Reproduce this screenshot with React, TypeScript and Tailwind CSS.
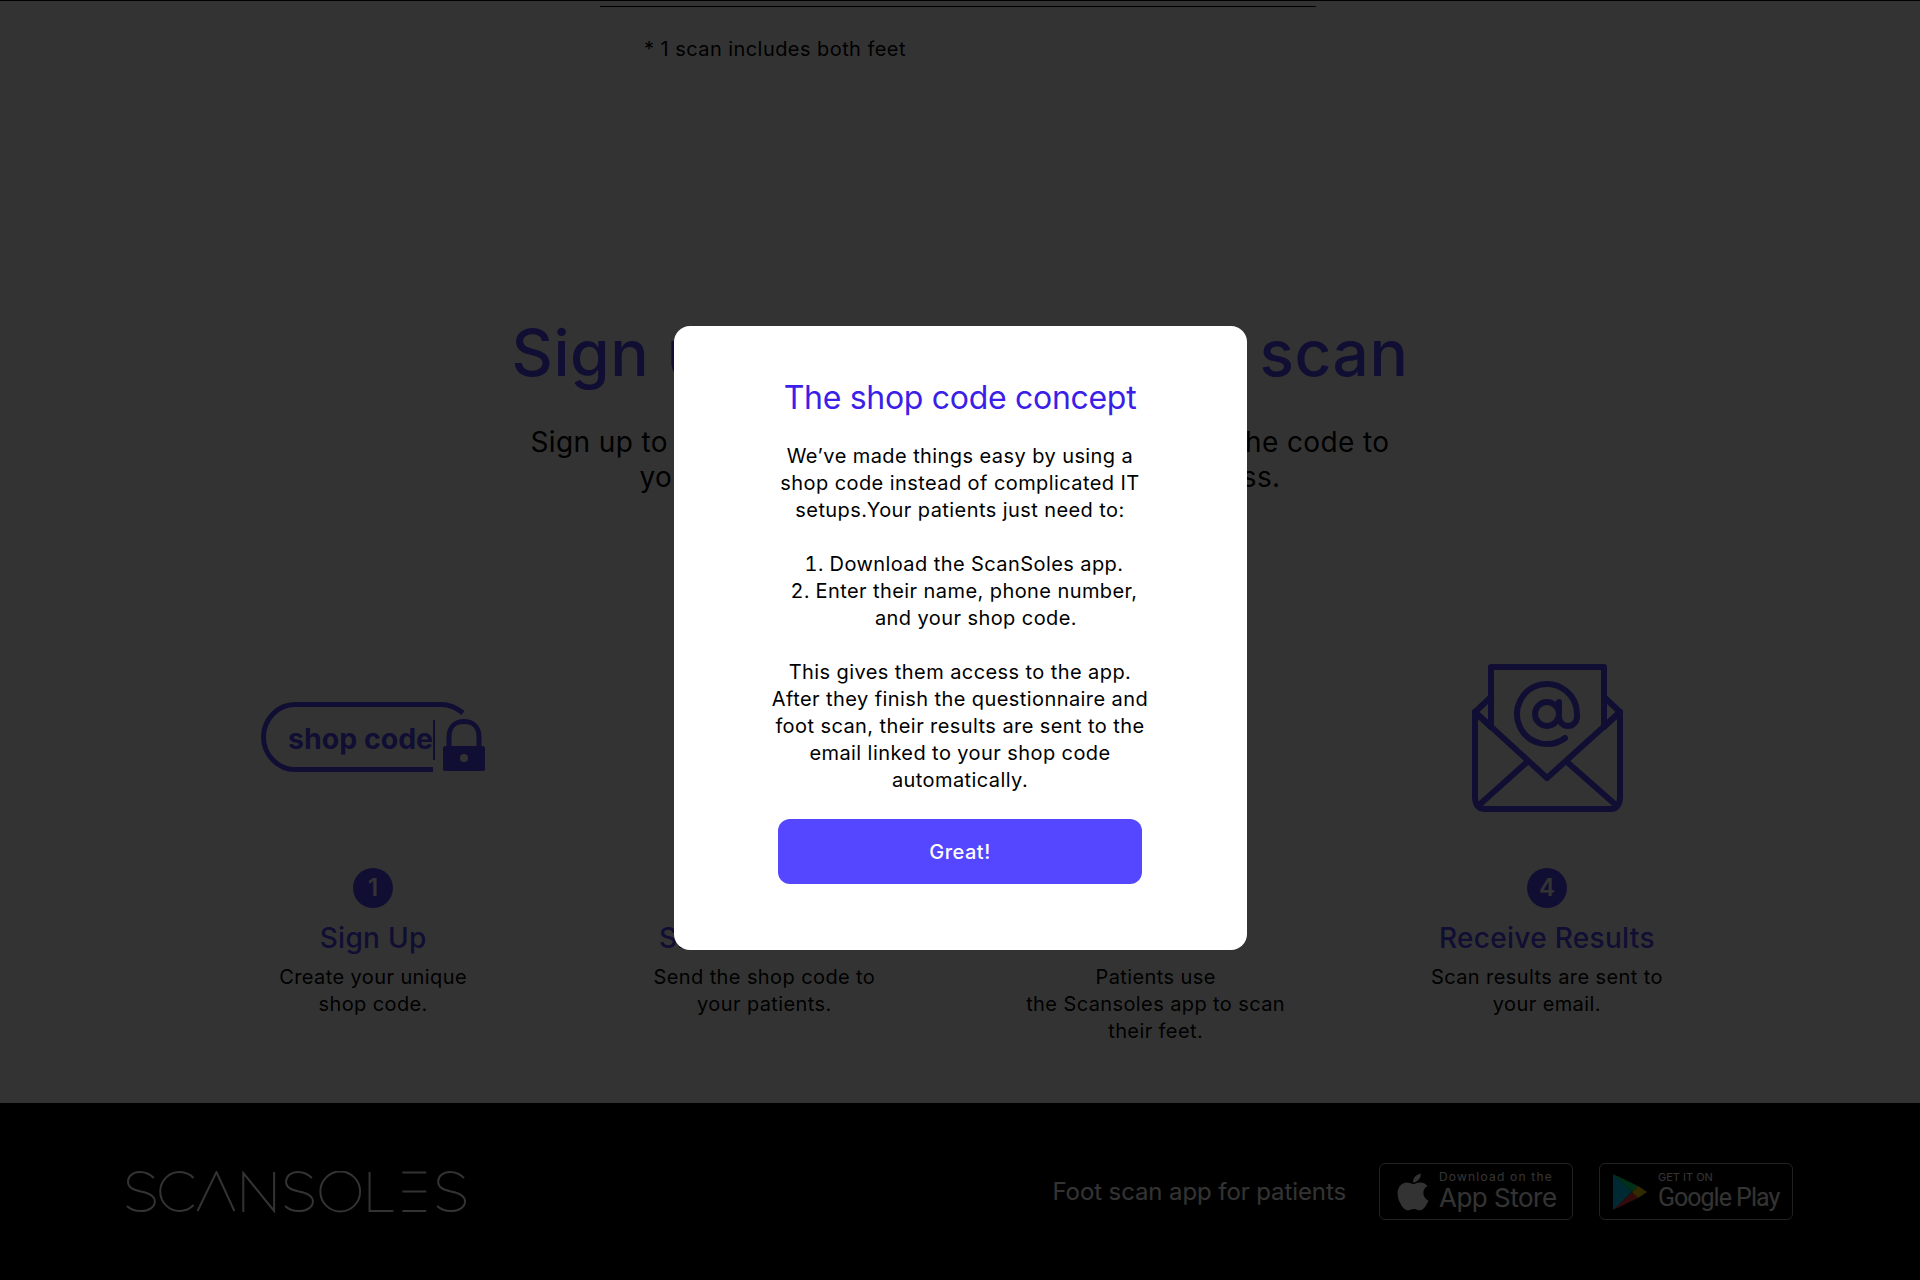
import { FaApple } from 'react-icons/fa';

const steps = [
  { n: 1, title: 'Sign Up', lines: ['Create your unique', 'shop code.'] },
  { n: 2, title: 'Share the Code', lines: ['Send the shop code to', 'your patients.'] },
  { n: 3, title: 'Scan Feet', lines: ['Patients use', 'the Scansoles app to scan', 'their feet.'] },
  { n: 4, title: 'Receive Results', lines: ['Scan results are sent to', 'your email.'] },
];

function ShopCodeIcon() {
  return (
    <svg className="mt-[3px]" width="230" height="80" viewBox="0 0 230 80" fill="none">
      <path d="M205 14 C199 9 192 5.500 183 5.500 H37 C20 5.500 5.500 20 5.500 38 C5.500 56 20 70.500 37 70.500 H175" stroke="#5546ff" strokeWidth="5" />
      <text x="30" y="50" fontFamily="Inter, sans-serif" fontWeight="700" fontSize="28.500" fill="#5546ff">shop code</text>
      <rect x="175" y="21" width="2" height="40" fill="#5546ff" />
      <path d="M191 48 V38 C191 28 197 22.500 206 22.500 C215 22.500 221 28 221 38 V48" stroke="#5546ff" strokeWidth="5" />
      <rect x="185" y="47" width="42" height="25" rx="2" fill="#5546ff" />
      <circle cx="206" cy="59" r="4" fill="#fff" />
    </svg>
  );
}

function MailIcon() {
  return (
    <svg width="152" height="152" viewBox="0 0 152 152" fill="none" stroke="#5546ff" strokeWidth="6" strokeLinejoin="round" strokeLinecap="round">
      <path d="M20 66 V6 H133 V66" />
      <path d="M20 36 L4 51 L20 66" />
      <path d="M133 36 L149 51 L133 66" />
      <path d="M4 51 V136 C4 143 7 148 14 148 H139 C146 148 149 143 149 136 V51" />
      <path d="M4 51 L76 117 L149 51" />
      <path d="M7 145 L56 101" />
      <path d="M146 145 L96 101" />
      <g transform="translate(40 17) scale(3)" strokeWidth="2">
        <circle cx="12" cy="12" r="4" />
        <path d="M16 8v5a3 3 0 0 0 6 0v-1a10 10 0 1 0-4 8" />
      </g>
    </svg>
  );
}

function Logo() {
  const s = 'M28 7 C24 3 19 1 14 1 C7 1 2 5 2 10.500 C2 17 8 19 15 20.500 C23 22 29 24.500 29 30.500 C29 36 23 40 15 40 C9 40 4 38 1 35';
  return (
    <svg width="340" height="42" viewBox="0 0 342 42" preserveAspectRatio="none" fill="none" stroke="#fff" strokeWidth="2" role="img" aria-label="Scansoles">
      <path d={s} />
      <path d="M68 7 A19.500 19.500 0 1 0 68 34" />
      <path d="M72 40 L91 1 L109 40" />
      <path d="M118 41 V2 L149 40 V1" />
      <path d={s} transform="translate(159 0)" />
      <circle cx="215.500" cy="20.500" r="20" />
      <path d="M245 1 V40 H269" />
      <path d="M278 1.500 H302 M278 20.500 H302 M278 40 H302" />
      <path d={s} transform="translate(312 0)" />
    </svg>
  );
}

function PlayIcon() {
  return (
    <svg width="34" height="38" viewBox="0 0 34 38">
      <path d="M0 1 L19 19 L0 37 Z" fill="#00d2ff" />
      <path d="M0 1 L25 13 L19 19 Z" fill="#00f076" />
      <path d="M0 37 L25 25 L19 19 Z" fill="#ff3a44" />
      <path d="M25 13 L34 19 L25 25 L19 19 Z" fill="#ffd400" />
    </svg>
  );
}

export default function App() {
  return (
    <div className="min-h-[1280px] bg-white flex flex-col text-black border-t border-black" style={{ fontFamily: 'Inter, sans-serif' }}>
      <div className="flex-1">
        <div className="w-[716px] ml-[600px] mt-[5px] border-t border-black pt-[29px] pl-[44px] text-[20px] leading-[27px] tracking-[0.44px]">
          * 1 scan includes both feet
        </div>

        <h1 className="mt-[251px] text-center text-[64px] leading-[77px] font-medium tracking-[0.5px] text-[#5546ff]">
          Sign up to get your free scan
        </h1>
        <p className="mt-[34px] text-center text-[28px] leading-[35px] tracking-[0.4px]">
          Sign up to get your personal shop code, then share the code to
          <br />
          your patients so they can get swift app access.
        </p>

        <div className="w-[1565px] mx-auto mt-[166px] grid grid-cols-4">
          {steps.map((step) => (
            <div key={step.n} className="flex flex-col items-center text-center">
              <div className="h-[152px] flex items-center justify-center">
                {step.n === 1 && <ShopCodeIcon />}
                {step.n === 4 && <MailIcon />}
              </div>
              <div className="mt-[55px] w-[40px] h-[40px] rounded-full bg-[#5546ff] text-white flex items-center justify-center text-[24px] font-semibold">
                {step.n}
              </div>
              <h3 className="mt-[11px] text-[28px] leading-[38px] font-medium tracking-[0.3px] text-[#5546ff]">{step.title}</h3>
              <p className="mt-[7px] text-[20px] leading-[27px] tracking-[0.4px]">
                {step.lines.map((line) => (
                  <span key={line} className="block">{line}</span>
                ))}
              </p>
            </div>
          ))}
        </div>
      </div>

      <footer className="h-[177px] bg-black text-white flex items-center justify-between pl-[126px] pr-[127px]">
        <Logo />
        <div className="flex items-center">
          <span className="text-[24px] mr-[33px] tracking-[-0.1px]">Foot scan app for patients</span>
          <div className="w-[194px] h-[57px] rounded-[6px] border border-[#a6a6a6] flex items-center pl-[12px] whitespace-nowrap">
            <FaApple className="text-[42px] mr-[5px]" />
            <div className="flex flex-col">
              <span className="text-[12px] leading-[13px] tracking-[1.2px]">Download on the</span>
              <span className="text-[26px] leading-[30px] font-normal tracking-[-0.5px]">App Store</span>
            </div>
          </div>
          <div className="w-[194px] h-[57px] ml-[26px] rounded-[6px] border border-[#a6a6a6] flex items-center pl-[13px] whitespace-nowrap">
            <PlayIcon />
            <div className="flex flex-col ml-[11px]">
              <span className="text-[11px] leading-[12px]">GET IT ON</span>
              <span className="text-[25px] leading-[30px] tracking-[-1px]" style={{ fontFamily: 'Roboto, sans-serif' }}>Google Play</span>
            </div>
          </div>
        </div>
      </footer>

      <div className="fixed inset-0 bg-black/80 flex items-center justify-center">
        <div className="w-[573px] h-[624px] mb-[4px] bg-white rounded-[16px] flex flex-col items-center pt-[52px] text-center">
          <h2 className="text-[32px] leading-[39px] font-normal tracking-[-0.3px] text-[#3b1fe8]">The shop code concept</h2>
          <div className="w-[364px] mt-[26px] text-[20px] leading-[27px] tracking-[0.42px]">
            <p className="-mx-[10px]">We’ve made things easy by using a shop code instead of complicated IT setups.Your patients just need to:</p>
            <ol className="list-decimal list-inside pl-[32px] -indent-6 mt-[27px]">
              <li>Download the ScanSoles app.</li>
              <li>Enter their name, phone number, and your shop code.</li>
            </ol>
            <p className="mt-[27px] -mx-[10px]">This gives them access to the app. After they finish the questionnaire and foot scan, their results are sent to the email linked to your shop code automatically.</p>
          </div>
          <button className="w-[364px] h-[65px] mt-[25px] rounded-[12px] bg-[#5546ff] text-white text-[20px] font-medium tracking-[0.5px]">Great!</button>
        </div>
      </div>
    </div>
  );
}
